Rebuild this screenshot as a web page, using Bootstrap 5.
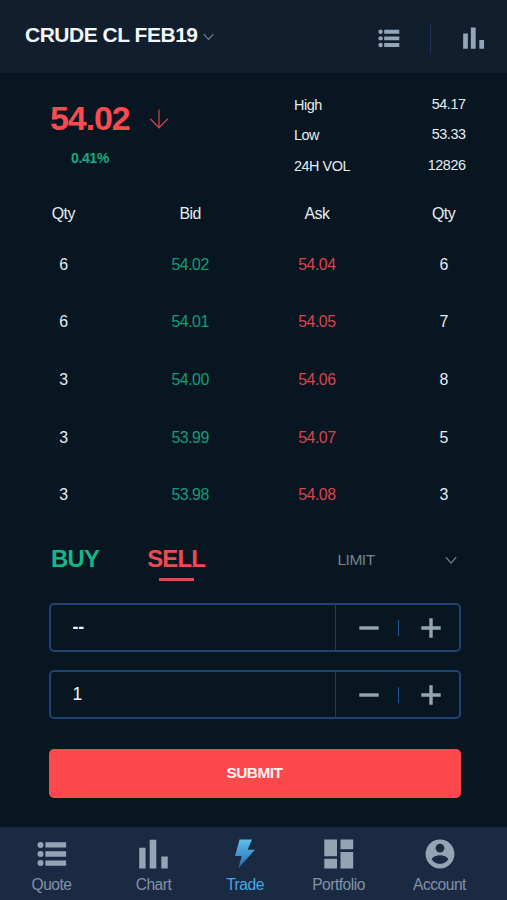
<!DOCTYPE html>
<html lang="en">
<head>
<meta charset="utf-8">
<meta name="viewport" content="width=device-width, initial-scale=1">
<title>Trade</title>
<link href="https://cdn.jsdelivr.net/npm/bootstrap@5.3.0/dist/css/bootstrap.min.css" rel="stylesheet">
<style>
  :root { --ink:#e6edf2; --red:#fd4a50; --steel:#93a5b5; --line:#1c4476; }
  body { background:#071621; color:var(--ink); font-family:"Liberation Sans",Arial,sans-serif; font-size:15.9px; line-height:20px; }
  /* slightly tightened tracking, scaled with each text size */
  div, span, dt, dd, a, button { letter-spacing:-.032em; }
  svg { display:block; flex:none; }
  .screen { height:900px; overflow:hidden; }
  .top-bar { height:73px; background:#111e2e; padding:0 22px 0 25px; }
  .pair { font-size:21px; line-height:24px; color:#f4f8fc; padding-bottom:3px; letter-spacing:-.023em; }
  .pair svg { margin:4px 0 0 5.5px; }
  .tools { padding-top:3px; color:#93a5b8; }
  .tools .bar { width:1px; height:30px; background:#203259; margin:0 32px 0 30px; }
  .summary { height:118.2px; padding:16.6px 41.5px 0 50px; }
  .last { font-size:34px; line-height:36px; color:var(--red); padding-top:10px; }
  .last svg { margin:3px 0 0 19px; }
  .change { font-size:14.2px; color:#16aa80; padding:12px 0 0 21px; }
  .stats { width:171.5px; font-size:14.4px; }
  .stats > div { height:30.6px; }
  .stats dt, .stats dd { margin:0; font-weight:400; }
  .stats dd { padding-bottom:2px; }
  .book { padding:.8px 0 0 0; }
  .book-head { height:44px; }
  .book-line { height:57.6px; }
  .bid { color:#109f78; }
  .ask { color:#d9454c; }
  .ticket { padding:0 46.5px 0 48.5px; }
  .sides { height:79px; padding:0 3px 9px 2.5px; font-size:23.9px; }
  .buy { color:#11b888; }
  .sell { color:#ee4b53; margin-left:48px; position:relative; }
  .sell::after { content:""; position:absolute; left:12px; top:29px; width:35px; height:3px; background:#dc4a52; }
  .kind { width:120px; font-size:15.5px; color:#75838f; padding-top:3px; }
  .kind svg { margin-right:.5px; }
  .stepper { height:49px; border:2px solid var(--line); border-radius:5px; margin-bottom:18px; }
  .stepper .value { padding:0 0 1px 22px; font-size:17.5px; color:#f2f6f9; letter-spacing:0; }
  .stepper .keys { width:123.5px; border-left:1px solid #1b3c69; padding:2px 0 0 22.5px; }
  .stepper .keys i { width:1px; height:16px; background:#1f5391; margin:0 22px 0 19.5px; }
  .send { height:49px; margin-top:12px; border:0; border-radius:5px; background:#fd484c; color:#fff5f5; font-size:15.4px; font-weight:700; padding:0 0 2px; }
  .send:hover { background:#fd484c; color:#fff5f5; }
  .tabs { height:73px; background:#1b2a43; display:grid; grid-template-columns:103px 101px 82px 105px 97px; color:#8292a7; font-size:15.6px; padding-top:12px; }
  .tabs a { color:inherit; text-decoration:none; }
  .tabs svg { margin-bottom:6px; }
  .tabs a.current { color:#4ba6e2; }
</style>
<script src="https://cdn.jsdelivr.net/npm/bootstrap@5.3.0/dist/js/bootstrap.bundle.min.js"></script>
</head>
<body>
<svg width="0" height="0" class="position-absolute" aria-hidden="true">
  <symbol id="list" viewBox="0 0 30 26"><g fill="currentColor"><circle cx="3.5" cy="3.7" r="3"/><circle cx="3.5" cy="12.8" r="3"/><circle cx="3.5" cy="21.9" r="3"/><path d="M8.4 1h20.7v5.4H8.4zM8.4 10.1h20.7v5.4H8.4zM8.4 19.2h20.7v5.4H8.4z"/></g></symbol>
  <symbol id="bars" viewBox="0 0 30 30"><path fill="currentColor" d="M.2 8.8h6.4v20.8H.2zM10.7.8h6.6v28.8h-6.6zM22.3 17.6h6.4v12h-6.4z"/></symbol>
  <symbol id="minus" viewBox="0 0 20 20"><path stroke="#93a5b1" stroke-width="3.4" d="M.3 10h19.4"/></symbol>
  <symbol id="plus" viewBox="0 0 20 20"><path stroke="#93a5b1" stroke-width="3.4" d="M.3 10h19.4M10 .3v19.4"/></symbol>
</svg>
<div class="screen d-flex flex-column">
  <header class="top-bar d-flex justify-content-between align-items-center">
    <div class="pair fw-bold d-flex align-items-center">CRUDE CL FEB19
      <svg width="11" height="8" fill="none" stroke="#748190" stroke-width="1.1"><path d="M.7 1.2l4.8 5.2 4.8-5.2"/></svg>
    </div>
    <div class="tools d-flex align-items-center">
      <svg width="22" height="19"><use href="#list"/></svg>
      <span class="bar"></span>
      <svg width="22" height="22"><use href="#bars"/></svg>
    </div>
  </header>

  <section class="summary d-flex justify-content-between">
    <div>
      <div class="last fw-bold d-flex align-items-center">54.02
        <svg width="20" height="22" fill="none" stroke="#cf4149" stroke-width="1.3"><path d="M10 1.5v18.3M1.2 10.8l8.8 9 8.8-9"/></svg>
      </div>
      <div class="change fw-bold">0.41%</div>
    </div>
    <dl class="stats mb-0">
      <div class="d-flex justify-content-between align-items-center"><dt>High</dt><dd>54.17</dd></div>
      <div class="d-flex justify-content-between align-items-center"><dt>Low</dt><dd>53.33</dd></div>
      <div class="d-flex justify-content-between align-items-center"><dt>24H VOL</dt><dd>12826</dd></div>
    </dl>
  </section>

  <section class="book text-center">
    <div class="book-head row g-0 align-items-center"><div class="col">Qty</div><div class="col">Bid</div><div class="col">Ask</div><div class="col">Qty</div></div>
    <div class="book-line row g-0 align-items-center"><div class="col">6</div><div class="col bid">54.02</div><div class="col ask">54.04</div><div class="col">6</div></div>
    <div class="book-line row g-0 align-items-center"><div class="col">6</div><div class="col bid">54.01</div><div class="col ask">54.05</div><div class="col">7</div></div>
    <div class="book-line row g-0 align-items-center"><div class="col">3</div><div class="col bid">54.00</div><div class="col ask">54.06</div><div class="col">8</div></div>
    <div class="book-line row g-0 align-items-center"><div class="col">3</div><div class="col bid">53.99</div><div class="col ask">54.07</div><div class="col">5</div></div>
    <div class="book-line row g-0 align-items-center"><div class="col">3</div><div class="col bid">53.98</div><div class="col ask">54.08</div><div class="col">3</div></div>
  </section>

  <section class="ticket">
    <div class="sides d-flex align-items-center">
      <span class="buy fw-bold">BUY</span>
      <span class="sell fw-bold">SELL</span>
      <div class="kind ms-auto d-flex justify-content-between align-items-center">LIMIT
        <svg width="12" height="9" fill="none" stroke="#687783" stroke-width="1.3"><path d="M.8 1.3L6 7l5.2-5.7"/></svg>
      </div>
    </div>
    <div class="stepper d-flex">
      <div class="value flex-grow-1 d-flex align-items-center fw-bold">--</div>
      <div class="keys d-flex align-items-center">
        <svg width="20" height="20"><use href="#minus"/></svg><i></i><svg width="20" height="20"><use href="#plus"/></svg>
      </div>
    </div>
    <div class="stepper d-flex">
      <div class="value flex-grow-1 d-flex align-items-center">1</div>
      <div class="keys d-flex align-items-center">
        <svg width="20" height="20"><use href="#minus"/></svg><i></i><svg width="20" height="20"><use href="#plus"/></svg>
      </div>
    </div>
    <button type="button" class="send btn w-100">SUBMIT</button>
  </section>

  <nav class="tabs mt-auto">
    <a href="#" class="d-flex flex-column align-items-center"><svg width="30" height="30" viewBox="0 -2.2 30 30" color="#93a5b5"><use href="#list" width="30" height="26"/></svg>Quote</a>
    <a href="#" class="d-flex flex-column align-items-center"><svg width="30" height="30" color="#93a5b5"><use href="#bars"/></svg>Chart</a>
    <a href="#" class="current d-flex flex-column align-items-center"><svg width="24" height="30" viewBox="0 0 24 30"><defs><linearGradient id="bolt" x1="0" y1="0" x2="0" y2="1"><stop offset="0" stop-color="#5fc0e8"/><stop offset="1" stop-color="#2468b5"/></linearGradient></defs><path fill="url(#bolt)" d="M6.6.6h12.4l-4.4 10.2H22L5.3 29.2 8.7 17H2z"/></svg>Trade</a>
    <a href="#" class="d-flex flex-column align-items-center"><svg width="30" height="30"><path fill="#93a5b5" d="M.3.6h12.7v16.7H.3zM.3 19.8h12.7v9.6H.3zM16.5.6h12.7v9.6H16.5zM16.5 13h12.7v16.4H16.5z"/></svg>Portfolio</a>
    <a href="#" class="d-flex flex-column align-items-center"><svg width="30" height="30" viewBox="0 0 30 30"><path fill="#93a5b5" fill-rule="evenodd" d="M15 .6a14.4 14.4 0 1 0 0 28.8A14.4 14.4 0 0 0 15 .6zM15 4.7a4.4 4.4 0 1 1 0 8.8 4.4 4.4 0 0 1 0-8.8zM15 25c-3.5 0-6.5-1.7-8.3-4.4.1-2.9 5.5-4.4 8.3-4.4s8.2 1.5 8.3 4.4C21.5 23.3 18.5 25 15 25z"/></svg>Account</a>
  </nav>
</div>
</body>
</html>
